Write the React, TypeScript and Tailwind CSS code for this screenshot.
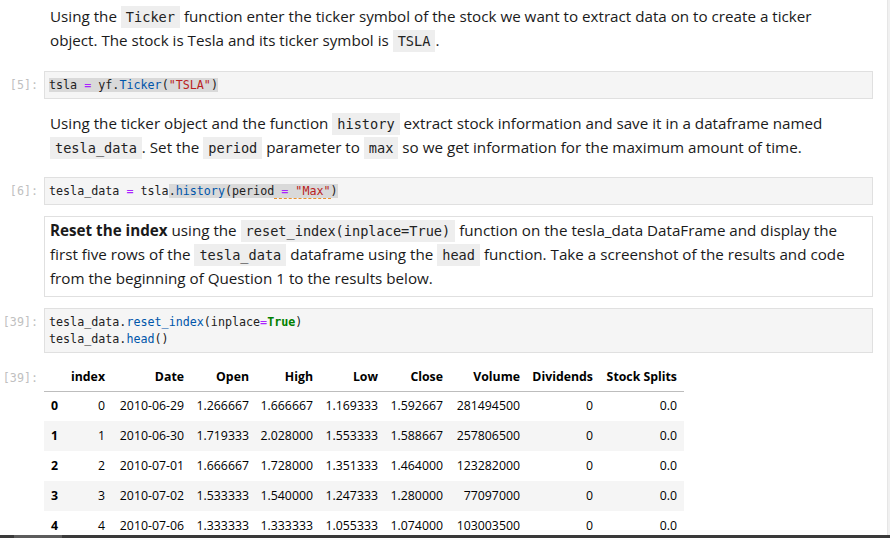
import type { ReactNode } from "react";

const prose = "font-['Open_Sans',sans-serif] text-[15.2px] leading-[24px] text-[#1a1a1a]";
const mono = "font-['DejaVu_Sans_Mono',monospace]";

function Chip({ children }: { children: ReactNode }) {
  return (
    <code className={`${mono} bg-[#eeeeee] px-[5px] py-[3px] text-[13.6px] leading-none text-[#222]`}>
      {children}
    </code>
  );
}

function Prompt({ label }: { label: string }) {
  return (
    <div className={`${mono} w-[44px] shrink-0 pr-[6px] text-right text-[11.7px] leading-[17px] text-[#c0c0c0]`}>
      {label}
    </div>
  );
}

function CodeCell({ label, children }: { label: string; children: ReactNode }) {
  return (
    <div className="flex items-start">
      <div className="pt-[6px]">
        <Prompt label={label} />
      </div>
      <div
        className={`${mono} w-[829px] border border-[#e0e0e0] bg-[#f5f5f5] px-[4px] pt-[5px] pb-[4px] text-[11.7px] leading-[17px] text-[#212121] whitespace-pre`}
      >
        {children}
      </div>
    </div>
  );
}

const op = "text-[#aa22ff]";
const prop = "text-[#0055aa]";
const str = "text-[#ba2121]";

const rows = [
  ["0", "2010-06-29", "1.266667", "1.666667", "1.169333", "1.592667", "281494500", "0", "0.0"],
  ["1", "2010-06-30", "1.719333", "2.028000", "1.553333", "1.588667", "257806500", "0", "0.0"],
  ["2", "2010-07-01", "1.666667", "1.728000", "1.351333", "1.464000", "123282000", "0", "0.0"],
  ["3", "2010-07-02", "1.533333", "1.540000", "1.247333", "1.280000", "77097000", "0", "0.0"],
  ["4", "2010-07-06", "1.333333", "1.333333", "1.055333", "1.074000", "103003500", "0", "0.0"],
];

const headers = ["index", "Date", "Open", "High", "Low", "Close", "Volume", "Dividends", "Stock Splits"];
const widths = [47, 79, 65, 64, 65, 65, 77, 73, 84];

function DataTable() {
  return (
    <table className="table-fixed border-collapse font-['Open_Sans',sans-serif] text-[12.3px] text-[#000]">
      <colgroup>
        <col style={{ width: 21 }} />
        {widths.map((w, i) => (
          <col key={i} style={{ width: w }} />
        ))}
      </colgroup>
      <thead>
        <tr className="h-[27px] border-b border-[#bdbdbd]">
          <th />
          {headers.map((h) => (
            <th key={h} className="pr-[7px] text-right font-bold whitespace-nowrap">
              {h}
            </th>
          ))}
        </tr>
      </thead>
      <tbody>
        {rows.map((r, i) => (
          <tr key={i} className={`h-[30px] ${i % 2 === 1 ? "bg-[#f5f5f5]" : ""}`}>
            <th className="pr-[7px] text-right font-bold">{r[0]}</th>
            {r.map((c, j) => (
              <td key={j} className="pr-[7px] text-right whitespace-nowrap">
                {c}
              </td>
            ))}
          </tr>
        ))}
      </tbody>
    </table>
  );
}

export default function App() {
  return (
    <div className="flex h-[538px] w-[890px] flex-col overflow-hidden bg-white">
      <div className="flex min-h-0 flex-1">
        <div className="min-w-0 flex-1 overflow-hidden">
          {/* Markdown: Ticker */}
          <div className={`${prose} pl-[50px] pt-[4px] whitespace-nowrap`}>
            Using the <Chip>Ticker</Chip> function enter the ticker symbol of the stock we want to extract data on to
            create a ticker
            <br />
            object. The stock is Tesla and its ticker symbol is <Chip>TSLA</Chip>.
          </div>

          <div className="mt-[19px]">
            <CodeCell label="[5]:">
              <span className="bg-[#d9d9d9]">
                tsla <span className={op}>=</span> yf.<span className={prop}>Ticker</span>(
                <span className={str}>"TSLA"</span>)
              </span>
            </CodeCell>
          </div>

          {/* Markdown: history */}
          <div className={`${prose} mt-[12px] pl-[50px] whitespace-nowrap`}>
            Using the ticker object and the function <Chip>history</Chip> extract stock information and save it in a
            dataframe named
            <br />
            <Chip>tesla_data</Chip>. Set the <Chip>period</Chip> parameter to <Chip>max</Chip> so we get information for
            the maximum amount of time.
          </div>

          <div className="mt-[18px]">
            <CodeCell label="[6]:">
              tesla_data <span className={op}>=</span> tsla
              <span className="bg-[#d9d9d9]">
                .<span className={prop}>history</span>(period
                <span className="border-b border-dashed border-[#e8912d]">
                  {" "}
                  <span className={op}>=</span> <span className={str}>"Max"</span>
                </span>
                )
              </span>
            </CodeCell>
          </div>

          {/* Markdown: reset index (selected) */}
          <div className="mt-[11px] flex">
            <div className="w-[44px] shrink-0" />
            <div className={`${prose} w-[829px] border border-[#e0e0e0] px-[5px] pt-[1px] pb-[6px] whitespace-nowrap`}>
              <b>Reset the index</b> using the <Chip>reset_index(inplace=True)</Chip> function on the tesla_data
              DataFrame and display the
              <br />
              first five rows of the <Chip>tesla_data</Chip> dataframe using the <Chip>head</Chip> function. Take a
              screenshot of the results and code
              <br />
              from the beginning of Question 1 to the results below.
            </div>
          </div>

          <div className="mt-[11px]">
            <CodeCell label="[39]:">
              tesla_data.<span className={prop}>reset_index</span>(inplace
              <span className={op}>=</span>
              <span className="font-bold text-[#008000]">True</span>)
              {"\n"}
              tesla_data.<span className={prop}>head</span>()
            </CodeCell>
          </div>

          {/* Output */}
          <div className="mt-[11px] flex items-start">
            <div className="pt-[6px]">
              <Prompt label="[39]:" />
            </div>
            <DataTable />
          </div>
        </div>
        <div className="w-[3px] shrink-0 border-l border-[#e6e6e6] bg-[#f0f0f0]" />
      </div>
      {/* horizontal scrollbar */}
      <div className="flex h-[3px] shrink-0 bg-[#3a3a3a]">
        <div className="ml-[14px] w-[48px] bg-[#5c5c5c]" />
      </div>
    </div>
  );
}
